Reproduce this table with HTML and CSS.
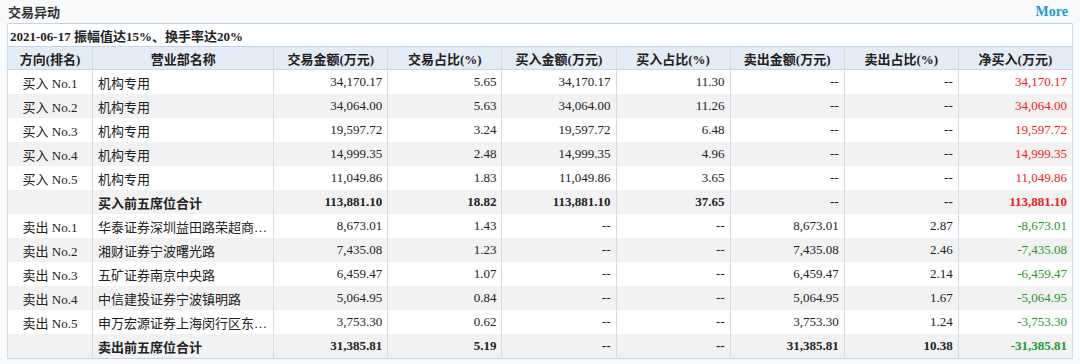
FILE: index.html
```html
<!DOCTYPE html>
<html lang="zh-CN">
<head>
    <meta charset="UTF-8">
    <title>交易异动</title>
    <link rel="stylesheet" href="styles.css">
</head>
<body>
    <div class="panel">
        <div class="panel-head">
            <span class="panel-title">交易异动</span>
            <a class="more" href="#">More</a>
        </div>
        <table class="lhb">
            <colgroup>
                <col class="c-dir"><col class="c-name"><col class="c-num"><col class="c-num"><col class="c-num">
                <col class="c-num"><col class="c-num"><col class="c-num"><col class="c-num">
            </colgroup>
            <tr class="caption-row">
                <td colspan="9">2021-06-17 振幅值达15%、换手率达20%</td>
            </tr>
            <tr class="head">
                <th>方向(排名)</th>
                <th>营业部名称</th>
                <th>交易金额(万元)</th>
                <th>交易占比(%)</th>
                <th>买入金额(万元)</th>
                <th>买入占比(%)</th>
                <th>卖出金额(万元)</th>
                <th>卖出占比(%)</th>
                <th>净买入(万元)</th>
            </tr>
            <tr>
                <td class="dir">买入 No.1</td><td class="name">机构专用</td>
                <td>34,170.17</td><td>5.65</td><td>34,170.17</td><td>11.30</td><td>--</td><td>--</td><td class="up">34,170.17</td>
            </tr>
            <tr>
                <td class="dir">买入 No.2</td><td class="name">机构专用</td>
                <td>34,064.00</td><td>5.63</td><td>34,064.00</td><td>11.26</td><td>--</td><td>--</td><td class="up">34,064.00</td>
            </tr>
            <tr>
                <td class="dir">买入 No.3</td><td class="name">机构专用</td>
                <td>19,597.72</td><td>3.24</td><td>19,597.72</td><td>6.48</td><td>--</td><td>--</td><td class="up">19,597.72</td>
            </tr>
            <tr>
                <td class="dir">买入 No.4</td><td class="name">机构专用</td>
                <td>14,999.35</td><td>2.48</td><td>14,999.35</td><td>4.96</td><td>--</td><td>--</td><td class="up">14,999.35</td>
            </tr>
            <tr>
                <td class="dir">买入 No.5</td><td class="name">机构专用</td>
                <td>11,049.86</td><td>1.83</td><td>11,049.86</td><td>3.65</td><td>--</td><td>--</td><td class="up">11,049.86</td>
            </tr>
            <tr class="total">
                <td class="dir"></td><td class="name">买入前五席位合计</td>
                <td>113,881.10</td><td>18.82</td><td>113,881.10</td><td>37.65</td><td>--</td><td>--</td><td class="up">113,881.10</td>
            </tr>
            <tr>
                <td class="dir">卖出 No.1</td><td class="name">华泰证券深圳益田路荣超商…</td>
                <td>8,673.01</td><td>1.43</td><td>--</td><td>--</td><td>8,673.01</td><td>2.87</td><td class="down">-8,673.01</td>
            </tr>
            <tr>
                <td class="dir">卖出 No.2</td><td class="name">湘财证券宁波曙光路</td>
                <td>7,435.08</td><td>1.23</td><td>--</td><td>--</td><td>7,435.08</td><td>2.46</td><td class="down">-7,435.08</td>
            </tr>
            <tr>
                <td class="dir">卖出 No.3</td><td class="name">五矿证券南京中央路</td>
                <td>6,459.47</td><td>1.07</td><td>--</td><td>--</td><td>6,459.47</td><td>2.14</td><td class="down">-6,459.47</td>
            </tr>
            <tr>
                <td class="dir">卖出 No.4</td><td class="name">中信建投证券宁波镇明路</td>
                <td>5,064.95</td><td>0.84</td><td>--</td><td>--</td><td>5,064.95</td><td>1.67</td><td class="down">-5,064.95</td>
            </tr>
            <tr>
                <td class="dir">卖出 No.5</td><td class="name">申万宏源证券上海闵行区东…</td>
                <td>3,753.30</td><td>0.62</td><td>--</td><td>--</td><td>3,753.30</td><td>1.24</td><td class="down">-3,753.30</td>
            </tr>
            <tr class="total">
                <td class="dir"></td><td class="name">卖出前五席位合计</td>
                <td>31,385.81</td><td>5.19</td><td>--</td><td>--</td><td>31,385.81</td><td>10.38</td><td class="down">-31,385.81</td>
            </tr>
        </table>
    </div>
</body>
</html>
```
FILE: styles.css
```css
body {
    margin: 0;
    background-color: #f8f9fb;
    font-family: "Liberation Serif", "Noto Sans CJK SC", serif;
    font-size: 13px;
    color: #222;
}

.panel {
    padding: 0 7px 0 7px;
}

.panel-head {
    display: flex;
    justify-content: space-between;
    align-items: center;
    height: 23px;
    padding-left: 1px;
}

.panel-title {
    font-weight: bold;
    font-size: 13px;
    color: #333;
}

.more {
    font-weight: bold;
    font-size: 14px;
    color: #1e9bd0;
    text-decoration: none;
    margin-right: 5px;
}

/* table of buyers / sellers */
.lhb {
    width: 1066px;
    border-collapse: collapse;
    table-layout: fixed;
    border: 1px solid #c3d4e6;
}

.c-dir { width: 85px; }
.c-name { width: 181px; }
.c-num { width: 114px; }

.lhb td, .lhb th {
    border-left: 1px solid #d3dde8;
    border-right: 1px solid #d3dde8;
    padding: 0 5px;
    height: 24px;
    text-align: right;
    white-space: nowrap;
    overflow: hidden;
}

.caption-row td {
    background-color: #fff;
    text-align: left;
    font-weight: bold;
    height: 22px;
    padding-left: 2px;
    border-bottom: 1px solid #c3d4e6;
}

.head th {
    background-color: #e4ecf6;
    text-align: center;
    font-weight: bold;
    height: 22px;
    border-bottom: 1px solid #c9d8e8;
}

.lhb tr:nth-child(odd) td {
    background-color: #fff;
}

.lhb tr:nth-child(even) td {
    background-color: #f2f2f2;
}

.lhb tr.caption-row td {
    background-color: #fff;
}

.lhb td.dir {
    text-align: center;
}

.lhb td.name {
    text-align: left;
}

.total td {
    font-weight: bold;
}

.up {
    color: #ee1c1c;
}

.down {
    color: #1f9a2c;
}
```
